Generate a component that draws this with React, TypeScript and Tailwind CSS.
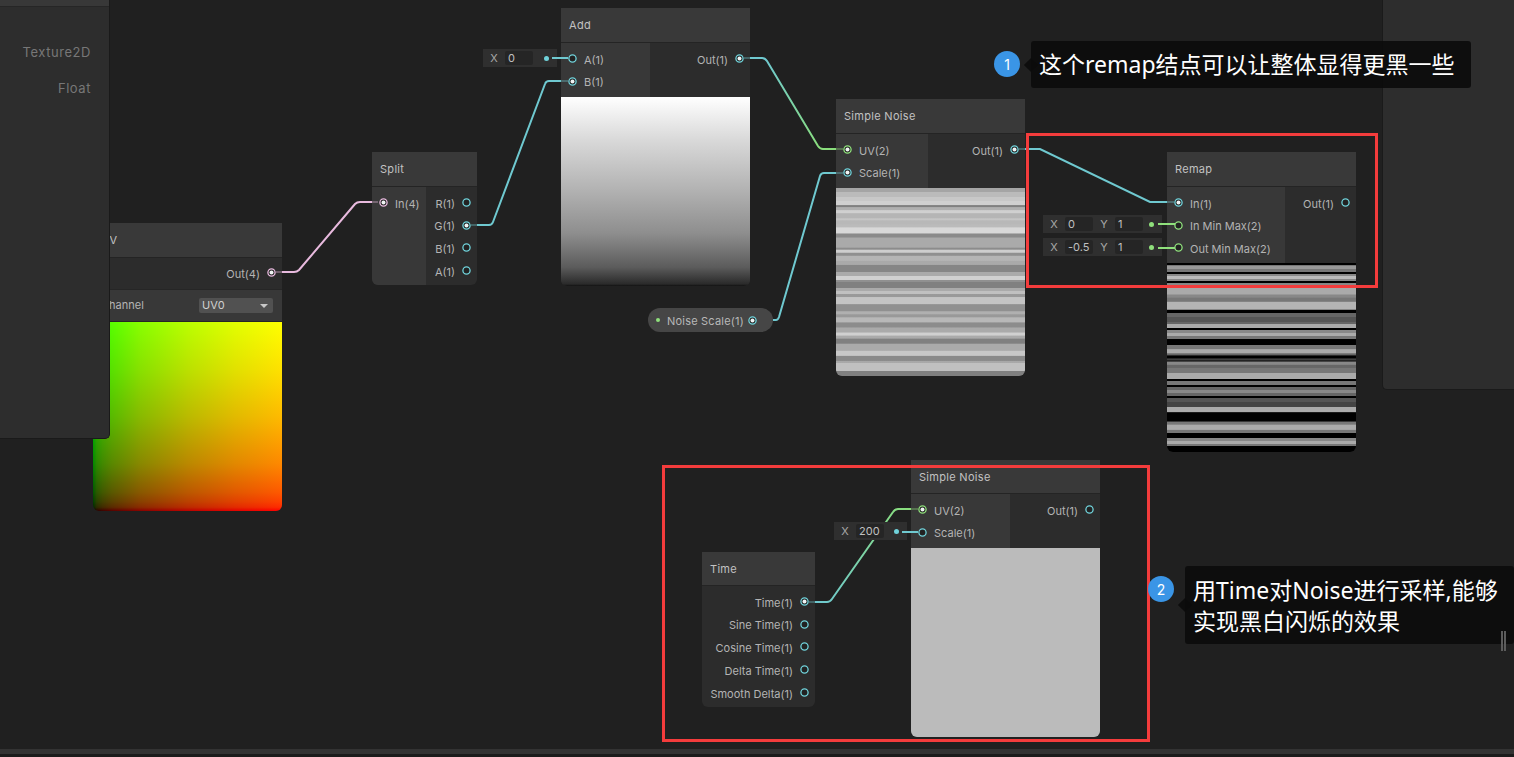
import type { ReactNode } from "react"

const CYAN = "#70d2da"
const GREEN = "#8fe07c"
const PINK = "#e8bade"

type Band = [number, number]

// [height in px, gray level] of the noise previews, top to bottom
const noiseBands: Band[] = [
  [4, 165], [5, 187], [4, 200], [4, 208], [2, 128], [3, 176], [3, 208], [5, 181], [2, 197], [4, 184], [3, 187],
  [6, 216], [4, 138], [10, 170], [2, 140], [3, 206], [3, 144], [5, 181], [4, 170], [7, 134], [4, 170], [4, 208],
  [2, 144], [6, 128], [3, 170], [3, 192], [3, 153], [7, 196], [7, 144], [3, 176], [3, 153], [5, 184], [5, 140],
  [5, 170], [3, 208], [3, 170], [5, 128], [7, 170], [5, 200], [5, 138], [2, 168], [8, 192], [5, 128],
]

const remapBands: Band[] = [
  [2, 0], [1, 119], [3, 153], [3, 119], [2, 0], [2, 136], [3, 187], [2, 136], [2, 0], [4, 136], [7, 170], [3, 136],
  [4, 119], [7, 180], [1, 136], [3, 0], [4, 102], [5, 85], [2, 102], [4, 170], [2, 0], [3, 136], [3, 170], [3, 119],
  [6, 0], [4, 119], [4, 170], [2, 102], [3, 0], [1, 85], [2, 34], [3, 136], [3, 102], [5, 119], [6, 170], [2, 0],
  [4, 119], [2, 0], [3, 102], [3, 136], [3, 102], [2, 0], [4, 85], [5, 68], [5, 170], [9, 0], [3, 119], [5, 170],
  [3, 119], [5, 0], [3, 136], [3, 170], [2, 119], [6, 0],
]

// bands to a css gradient, blur is the width of the fade between two bands in %
function bandsToGradient(bands: Band[], blur: number) {
  const total = bands.reduce((sum, b) => sum + b[0], 0)
  let y = 0
  const stops = bands.map(([h, g]) => {
    const from = (y / total) * 100 + blur / 2
    y += h
    const to = (y / total) * 100 - blur / 2
    return `rgb(${g},${g},${g}) ${from}% ${to}%`
  })
  return `linear-gradient(to bottom, ${stops.join(", ")})`
}

function Port({ color, on }: { color: string; on?: boolean }) {
  return (
    <svg width="11" height="11" viewBox="0 0 11 11" className="shrink-0">
      <circle cx="5.5" cy="5.5" r="3.6" fill="#222" stroke={color} strokeWidth="1.3" />
      {on && <circle cx="5.5" cy="5.5" r="2" fill="#f0f4f4" />}
    </svg>
  )
}

function InRow({ label, color, on }: { label: string; color: string; on?: boolean }) {
  return (
    <div className="flex h-[22.75px] items-center gap-[6px] pl-[6px]">
      <Port color={color} on={on} />
      <span className="pt-[3px] whitespace-nowrap">{label}</span>
    </div>
  )
}

function OutRow({ label, color, on }: { label: string; color: string; on?: boolean }) {
  return (
    <div className="flex h-[22.75px] items-center justify-end gap-[6px] pr-[5px]">
      <span className="pt-[3px] whitespace-nowrap">{label}</span>
      <Port color={color} on={on} />
    </div>
  )
}

function Node({ title, pos, titleH = "h-[35px]", left, right, children }: { title: string; pos: string; titleH?: string; left?: ReactNode; right: ReactNode; children?: ReactNode }) {
  return (
    <div className={`absolute flex flex-col overflow-hidden rounded-b-[6px] bg-[#2c2c2c] text-[11px] text-[#b4b4b4] ${pos}`}>
      <div className={`flex shrink-0 items-center border-b border-[#242424] bg-[#393939] pl-2 pt-[1px] tracking-[0.3px] text-[#c2c2c2] ${titleH}`}>{title}</div>
      <div className="flex">
        {left}
        {right}
      </div>
      {children}
    </div>
  )
}

function ValueField({ pos, items, dot }: { pos: string; items: [string, string][]; dot: string }) {
  return (
    <div className={`absolute flex h-[18px] items-center bg-[#2f2f2f] text-[11px] text-[#c0c0c0] ${pos}`}>
      {items.map(([axis, value]) => (
        <div key={axis} className="flex items-center">
          <span className="w-[22px] text-center text-[#a8a8a8]">{axis}</span>
          <span className="flex h-[14px] w-[28px] items-center rounded-[2px] bg-[#252525] pl-[3px]">{value}</span>
        </div>
      ))}
      <span className={`ml-auto mr-[8px] size-[5px] rounded-full ${dot}`} />
    </div>
  )
}

function Note({ n, pos, circle, children }: { n: number; pos: string; circle: string; children: ReactNode }) {
  return (
    <>
      <div className={`absolute flex size-[26px] items-center justify-center rounded-full bg-[#3a95e6] text-[14px] text-white ${circle}`}>{n}</div>
      <div className={`absolute rounded-[3px] bg-[#0b0b0b]/90 pl-2 font-['Noto_Sans','Noto_Sans_CJK_SC',sans-serif] text-[23px] leading-[31px] text-white ${pos}`}>
        <span className="absolute left-[-5px] top-1/2 size-[10px] -translate-y-1/2 rotate-45 bg-[#0b0b0b]/90" />
        {children}
      </div>
    </>
  )
}

export default function App() {
  return (
    <div className="flex h-[757px] w-[1514px] flex-col overflow-hidden bg-[#202020] font-['Inter',sans-serif]">
      <div className="relative h-[749px] shrink-0">
        {/* UV node, half hidden by the blackboard */}
        <Node
          title="UV"
          pos="left-[93px] top-[223px] w-[189px] h-[288px]"
          right={
            <div className="h-[31px] w-full pt-[3px]">
              <OutRow label="Out(4)" color={PINK} on />
            </div>
          }
        >
          <div className="flex h-[33px] shrink-0 items-center justify-between border-y border-[#262626] bg-[#383838] pl-2 pr-[9px]">
            <span>Channel</span>
            <span className="flex h-[15px] w-[74px] items-center justify-between rounded-[2px] bg-[#515151] pl-[3px] pr-[3px] text-[#d0d0d0]">
              UV0
              <span className="mr-[2px] h-0 w-0 border-x-[4px] border-t-[4px] border-x-transparent border-t-[#c8c8c8]" />
            </span>
          </div>
          <div className="flex-1 [background-blend-mode:screen] bg-[linear-gradient(to_right,#000_0%,#2b0000_2%,#410000_5%,#590000_10%,#880000_25%,#ba0000_50%,#e10000_75%,#f00_100%),linear-gradient(to_top,#000_0%,#002b00_2%,#004100_5%,#005900_10%,#008800_25%,#00ba00_50%,#00e100_75%,#0f0_100%)]" />
        </Node>

        {/* blackboard */}
        <div className="absolute left-0 top-0 h-[439px] w-[110px] rounded-br-[5px] border-r border-b border-[#1a1a1a] bg-[#2d2d2d] text-[13px] tracking-[0.55px] text-[#777]">
          <div className="h-[7px] border-b border-[#262626] bg-[#383838]" />
          <div className="flex flex-col items-end gap-[15px] pr-[18px] pt-[35px] leading-[21px]">
            <span>Texture2D</span>
            <span>Float</span>
          </div>
        </div>

        {/* graph inspector on the right */}
        <div className="absolute right-0 top-0 h-[390px] w-[132px] rounded-bl-[5px] border-l border-b border-[#1a1a1a] bg-[#2d2d2d]" />

        {/* wires */}
        <svg className="absolute inset-0" width="1514" height="749" fill="none" strokeWidth="2">
          <defs>
            <linearGradient id="addToNoise" gradientUnits="userSpaceOnUse" x1="0" y1="58" x2="0" y2="149">
              <stop offset="0" stopColor="#6fc9d0" />
              <stop offset="1" stopColor="#8ade7c" />
            </linearGradient>
            <linearGradient id="timeToNoise" gradientUnits="userSpaceOnUse" x1="815" y1="602" x2="911" y2="509">
              <stop offset="0" stopColor="#6fc9d0" />
              <stop offset="1" stopColor="#8ade7c" />
            </linearGradient>
          </defs>
          <path d="M282 272 H294 Q297 272 299 270 L355 204 Q357 202 360 202 H372" stroke={PINK} />
          <path d="M477 225 H489 Q492 225 493 222 L545 84 Q546 81 549 81 H561" stroke="#6fc9d0" />
          <path d="M750 58 H762 Q765 58 767 61 L818 146 Q820 149 823 149 H836" stroke="url(#addToNoise)" />
          <path d="M773 320 H776 Q778 320 779 317 L820 176 Q821 173 824 173 H836" stroke="#6fc9d0" />
          <path d="M1025 149 H1040 L1150 202 H1167" stroke="#6fc9d0" />
          <path d="M815 602 H827 Q830 602 832 599 L893 512 Q895 509 898 509 H911" stroke="url(#timeToNoise)" />
        </svg>

        <Node
          title="Split"
          pos="left-[372px] top-[152px] w-[105px]"
          left={
            <div className="h-[98px] w-[54px] shrink-0 bg-[#383838] pt-[4px]">
              <InRow label="In(4)" color={PINK} on />
            </div>
          }
          right={
            <div className="flex-1 pt-[4px]">
              <OutRow label="R(1)" color={CYAN} />
              <OutRow label="G(1)" color={CYAN} on />
              <OutRow label="B(1)" color={CYAN} />
              <OutRow label="A(1)" color={CYAN} />
            </div>
          }
        />

        <Node
          title="Add"
          pos="left-[561px] top-[8px] w-[189px]"
          left={
            <div className="h-[54px] w-[89px] shrink-0 bg-[#383838] pt-[4px]">
              <InRow label="A(1)" color={CYAN} />
              <InRow label="B(1)" color={CYAN} on />
            </div>
          }
          right={
            <div className="flex-1 pt-[4px]">
              <OutRow label="Out(1)" color={CYAN} on />
            </div>
          }
        >
          <div className="h-[189px] bg-[linear-gradient(to_bottom,#fff_0%,#dadada_22%,#b4b4b4_48%,#8e8e8e_72%,#5c5c5c_90%,#2a2a2a_99%,#111_100%)]" />
        </Node>

        <Node
          title="Simple Noise"
          pos="left-[836px] top-[99px] w-[189px]"
          left={
            <div className="h-[54px] w-[92px] shrink-0 bg-[#383838] pt-[4px]">
              <InRow label="UV(2)" color={GREEN} on />
              <InRow label="Scale(1)" color={CYAN} on />
            </div>
          }
          right={
            <div className="flex-1 pt-[4px]">
              <OutRow label="Out(1)" color={CYAN} on />
            </div>
          }
        >
          <div className="h-[188px]" style={{ background: bandsToGradient(noiseBands, 0.4) }} />
        </Node>

        <Node
          title="Remap"
          pos="left-[1167px] top-[152px] w-[189px]"
          left={
            <div className="h-[76px] w-[118px] shrink-0 bg-[#383838] pt-[4px]">
              <InRow label="In(1)" color={CYAN} on />
              <InRow label="In Min Max(2)" color={GREEN} />
              <InRow label="Out Min Max(2)" color={GREEN} />
            </div>
          }
          right={
            <div className="flex-1 pt-[4px]">
              <OutRow label="Out(1)" color={CYAN} />
            </div>
          }
        >
          <div className="h-[189px]" style={{ background: bandsToGradient(remapBands, 0.2) }} />
        </Node>

        <Node
          title="Simple Noise"
          pos="left-[911px] top-[460px] w-[189px]"
          titleH="h-[34px]"
          left={
            <div className="h-[54px] w-[99px] shrink-0 bg-[#383838] pt-[4px]">
              <InRow label="UV(2)" color={GREEN} on />
              <InRow label="Scale(1)" color={CYAN} />
            </div>
          }
          right={
            <div className="flex-1 pt-[4px]">
              <OutRow label="Out(1)" color={CYAN} />
            </div>
          }
        >
          <div className="h-[189px] bg-[#bbbbbb]" />
        </Node>

        <Node
          title="Time"
          pos="left-[702px] top-[552px] w-[113px]"
          titleH="h-[34px]"
          right={
            <div className="h-[121px] flex-1 pt-[4px]">
              <OutRow label="Time(1)" color={CYAN} on />
              <OutRow label="Sine Time(1)" color={CYAN} />
              <OutRow label="Cosine Time(1)" color={CYAN} />
              <OutRow label="Delta Time(1)" color={CYAN} />
              <OutRow label="Smooth Delta(1)" color={CYAN} />
            </div>
          }
        />

        {/* property node */}
        <div className="absolute left-[648px] top-[308px] flex h-[24px] w-[125px] items-center rounded-full bg-[#464646] pl-[8px] pr-[15px] text-[11px] tracking-[0.2px] text-[#b8b8b8]">
          <span className="size-[4px] rounded-full bg-[#8fe07c]" />
          <span className="ml-[7px] flex-1 pt-[2px] whitespace-nowrap">Noise Scale(1)</span>
          <Port color={CYAN} on />
        </div>

        {/* inline port values */}
        <ValueField pos="left-[483px] top-[49px] w-[74px]" items={[["X", "0"]]} dot="bg-[#70d2da]" />
        <ValueField pos="left-[1043px] top-[215px] w-[119px]" items={[["X", "0"], ["Y", "1"]]} dot="bg-[#8fe07c]" />
        <ValueField pos="left-[1043px] top-[238px] w-[119px]" items={[["X", "-0.5"], ["Y", "1"]]} dot="bg-[#8fe07c]" />
        <ValueField pos="left-[834px] top-[522px] w-[73px]" items={[["X", "200"]]} dot="bg-[#70d2da]" />

        {/* short stubs from node edge to port */}
        <svg className="absolute inset-0" width="1514" height="749" fill="none" strokeWidth="2">
          <g opacity="0.35">
            <path d="M276 272 H282" stroke={PINK} />
            <path d="M372 202 H378" stroke={PINK} />
            <path d="M471 225 H477" stroke="#6fc9d0" />
            <path d="M561 81 H568" stroke="#6fc9d0" />
            <path d="M744 58 H750" stroke="#6fc9d0" />
            <path d="M836 149 H843" stroke={GREEN} />
            <path d="M836 173 H843" stroke="#6fc9d0" />
            <path d="M1019 149 H1025" stroke="#6fc9d0" />
            <path d="M1167 202 H1174" stroke="#6fc9d0" />
            <path d="M809 602 H815" stroke="#6fc9d0" />
            <path d="M911 509 H918" stroke={GREEN} />
          </g>
          <path d="M552 58 H568" stroke="#6fc9d0" />
          <path d="M1158 224 H1175" stroke={GREEN} />
          <path d="M1158 248 H1175" stroke={GREEN} />
          <path d="M902 532 H918" stroke="#6fc9d0" />
        </svg>

        {/* annotations */}
        <div className="absolute left-[1026px] top-[133px] h-[155px] w-[352px] border-[3px] border-[#f43c3c]" />
        <div className="absolute left-[662px] top-[465px] h-[277px] w-[488px] border-[3px] border-[#f43c3c]" />

        <Note n={1} circle="left-[994px] top-[51px]" pos="left-[1031px] top-[41px] h-[47px] w-[440px] pt-[8px]">
          这个remap结点可以让整体显得更黑一些
        </Note>
        <Note n={2} circle="left-[1148px] top-[576px]" pos="left-[1185px] top-[566px] h-[78px] w-[329px] pt-[9px]">
          用Time对Noise进行采样,能够
          <br />
          实现黑白闪烁的效果
        </Note>

        {/* resize grip */}
        <div className="absolute left-[1501px] top-[631px] flex h-[20px] gap-[1px]">
          <span className="w-[2px] bg-[#5c5c5c]" />
          <span className="w-[2px] bg-[#5c5c5c]" />
        </div>
      </div>
      <div className="h-[5px] shrink-0 bg-[#333333]" />
      <div className="flex-1 bg-[#1b1b1b]" />
    </div>
  )
}
